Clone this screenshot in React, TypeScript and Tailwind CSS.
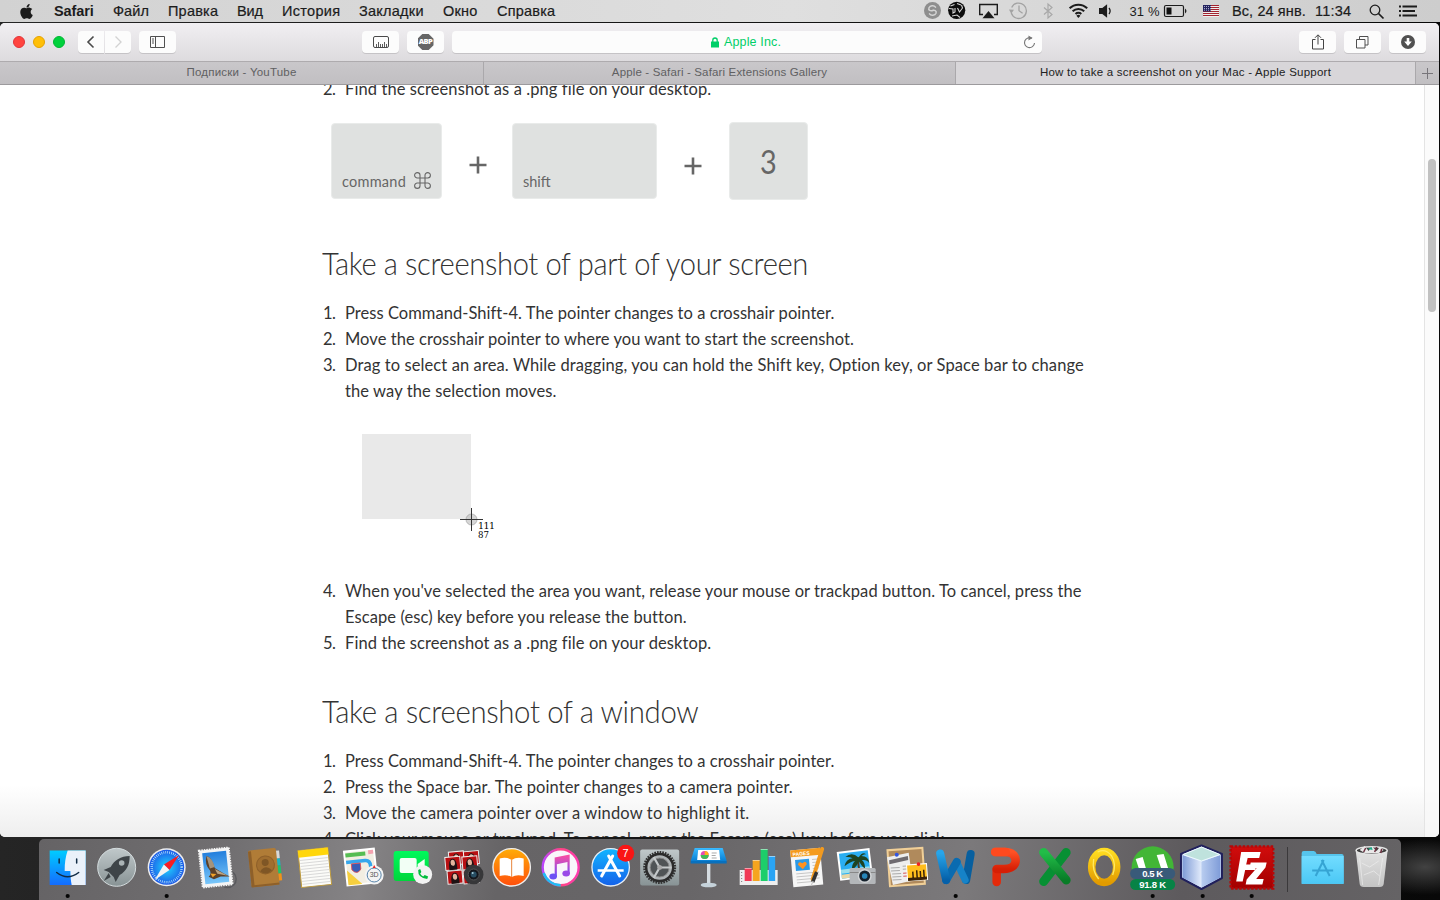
import type { ReactNode } from "react";
import { FaApple } from "react-icons/fa";

const menu: [string, string][] = [
  ["Файл", "w-[55px] tracking-[0.1px]"],
  ["Правка", "w-[69px] tracking-[0.2px]"],
  ["Вид", "w-[45px] tracking-[-0.1px]"],
  ["История", "w-[77px] tracking-[0.3px]"],
  ["Закладки", "w-[84px] tracking-[0.25px]"],
  ["Окно", "w-[54px] tracking-[0.2px]"],
  ["Справка", "w-[70px] tracking-[0.2px]"],
];

function MenuBar() {
  return (
    <div className="flex h-[22px] shrink-0 items-center bg-linear-to-r from-[#d2d2d2] via-[#dfdfdf] via-55% to-[#cdcdcd] text-[14.500px] leading-[22px] whitespace-nowrap text-[#1c1c1c]">
      <FaApple className="ml-[18px] h-[17px] w-[17px] shrink-0" />
      <span className="ml-[19px] w-[59px] shrink-0 font-bold tracking-[-0.1px]">Safari</span>
      {menu.map(([t, c]) => (
        <span key={t} className={`shrink-0 [-webkit-text-stroke:0.2px_#1c1c1c] ${c}`}>{t}</span>
      ))}
      <div className="ml-auto flex h-full shrink-0 items-center [-webkit-text-stroke:0.2px_#1c1c1c]">
        <svg className="h-[22px] w-[282px]" viewBox="922 0 282 22" fill="none">
          <circle cx="932.5" cy="10.5" r="8.500" fill="#8e8e8e" />
          <path d="M935.500 7.200c-1.500-2.200-5.500-1.600-6.500.6-1 2.400 1.500 3.800 4.200 2.400M929.500 13.800c1.500 2.200 5.500 1.600 6.500-.6 1-2.400-1.500-3.800-4.200-2.400" stroke="#d4d4d4" strokeWidth="1.500" strokeLinecap="round" />
          <circle cx="956.700" cy="10.300" r="8.600" fill="#0c0c0c" />
          <path d="M949 8.500l4 .5 0 4 2-1v-4M957.500 8l2 4 3-4-1-3M950.500 6l4-1.500M952 16l5-1 3 2.500M957 3.500l4 1.500" stroke="#d8d8d8" strokeWidth="1.100" />
          <path d="M983 14.500h-3.300v-10h17.600v10H994" stroke="#1c1c1c" strokeWidth="1.400" />
          <path d="M988.500 11l6 7.300h-12z" fill="#1c1c1c" />
          <path d="M1011.700 7.500a7.700 7.700 0 1 1-.4 5.500M1019 5.500v5.200l3.600 2.600" stroke="#a3a3a3" strokeWidth="1.300" />
          <path d="M1009 9.500l5 .2-2.800 4z" fill="#a3a3a3" />
          <path d="M1069.600 8.300a12.400 12.400 0 0 1 17.600 0M1072.600 11.300a8.200 8.200 0 0 1 11.600 0M1075.500 14a4.200 4.200 0 0 1 5.800 0" stroke="#1c1c1c" strokeWidth="2" />
          <path d="M1078.400 18l-2-2.200a2.900 2.900 0 0 1 4 0z" fill="#1c1c1c" />
          <path d="M1099 8h3.300l4.800-3.700v13.400L1102.300 14H1099z" fill="#1c1c1c" />
          <path d="M1109 8a5 5 0 0 1 0 6" stroke="#1c1c1c" strokeWidth="1.300" />
          <path d="M1044 7.500l8 7-4 3.500V4l4 3.500-8 7" stroke="#a8a8a8" strokeWidth="1.200" />
          <text x="1129.500" y="15.500" className="fill-[#1c1c1c] text-[13px]" textLength="30">31 %</text>
          <rect x="1164.500" y="5.500" width="19" height="11" rx="1.500" stroke="#1c1c1c" strokeWidth="1.200" />
          <path d="M1166.500 7.500h5v7h-5z" fill="#111" />
          <path d="M1185 8.500q3 2.500 0 5z" fill="#1c1c1c" />
        </svg>
        <svg className="-ml-px h-[12px] w-[16px]" viewBox="0 0 16 12">
          <path fill="#eee" d="M0 0h16v12H0z" />
          <path d="M0 .5h16M0 2.500h16M0 4.500h16M0 6.500h16M0 8.500h16M0 10.500h16" stroke="#a3232f" />
          <path fill="#22225e" d="M0 0h8v6.500H0z" />
          <path d="M1 1.500h7M1 3.500h7M1 5.200h7" stroke="#c7c7e0" strokeWidth=".8" strokeDasharray="1 1" />
        </svg>
        <span className="ml-[13px] w-[83px] tracking-[0.1px]">Вс, 24 янв.</span>
        <span className="w-[54px] tracking-[0.2px]">11:34</span>
        <svg className="h-[22px] w-[71px]" viewBox="1369 0 71 22" fill="none" stroke="#1c1c1c">
          <circle cx="1375" cy="10" r="4.800" strokeWidth="1.300" />
          <path d="M1378.500 13.500l5 5" strokeWidth="1.700" />
          <path d="M1402.500 6.500H1417M1402.500 11h12.500M1402.500 15.500H1417M1399 6.500h2M1399 11h2M1399 15.500h2" strokeWidth="1.900" />
        </svg>
      </div>
    </div>
  );
}

function Btn({ className, children }: { className: string; children: ReactNode }) {
  return (
    <div className={`flex h-[22px] shrink-0 items-center justify-center bg-[#fcfcfc] shadow-[0_1px_0_rgba(0,0,0,0.12)] ${className}`}>
      {children}
    </div>
  );
}

function Toolbar() {
  return (
    <div className="flex h-[39px] shrink-0 items-center border-b border-[#aeabae] bg-linear-to-b from-[#f1eff2] to-[#dddbde]">
      <div className="ml-[13px] flex gap-[8px]">
        <div className="h-[12px] w-[12px] rounded-full border border-[#e2333a] bg-[#ff443f]" />
        <div className="h-[12px] w-[12px] rounded-full border border-[#e6a200] bg-[#ffbf08]" />
        <div className="h-[12px] w-[12px] rounded-full border border-[#00b634] bg-[#00d13c]" />
      </div>
      <Btn className="ml-[13px] w-[26px] rounded-l-[4px]">
        <svg width="10" height="14" viewBox="0 0 10 14" fill="none" stroke="#4a4a4a" strokeWidth="1.600"><path d="M7.500 1.500L2 7l5.500 5.500" /></svg>
      </Btn>
      <Btn className="ml-px w-[26px] rounded-r-[4px]">
        <svg width="10" height="14" viewBox="0 0 10 14" fill="none" stroke="#d2d2d2" strokeWidth="1.300"><path d="M2.500 1.500L8 7l-5.500 5.500" /></svg>
      </Btn>
      <Btn className="ml-[8px] w-[37px] rounded-[4px]">
        <svg width="15" height="12" viewBox="0 0 15 12" fill="none" stroke="#505050"><path d="M.5.5h14v11H.5zM5.500.5v11M2 3h2M2 5h2M2 7h2" /></svg>
      </Btn>
      <Btn className="ml-[186px] w-[37px] rounded-[4px]">
        <svg width="16" height="12" viewBox="0 0 16 12" fill="none" stroke="#4a4a4a"><rect x=".5" y=".5" width="15" height="11" rx="1.500" /><path d="M3.500 11V8M5.500 11V6M7.500 11V8M9.500 11V8M11.500 11V6M13.500 11V8" strokeWidth=".9" /></svg>
      </Btn>
      <Btn className="ml-[8px] w-[37px] rounded-[4px]">
        <div className="flex h-[16px] w-[16px] items-center justify-center bg-[#666] font-[Open_Sans,sans-serif] text-[7.500px] font-extrabold tracking-[-0.5px] text-white [clip-path:polygon(30%_0,70%_0,100%_30%,100%_70%,70%_100%,30%_100%,0_70%,0_30%)]">ABP</div>
      </Btn>
      <div className="ml-[8px] flex h-[22px] w-[590px] shrink-0 items-center rounded-[4px] bg-[#fcfcfc] shadow-[0_1px_0_rgba(0,0,0,0.12)]">
        <svg className="ml-[259px]" width="8" height="11" viewBox="0 0 8 11"><rect y="4.500" width="8" height="6" fill="#00cf68" /><path d="M1.800 5V3.200a2.200 2.200 0 0 1 4.400 0V5" fill="none" stroke="#00cf68" strokeWidth="1.300" /></svg>
        <span className="ml-[5px] text-[12.500px] leading-[22px] tracking-[0.15px] text-[#00cf68]">Apple Inc.</span>
        <svg className="mr-[6px] ml-auto" width="13" height="14" viewBox="0 0 13 14" fill="none" stroke="#777"><path d="M9 3.300A5 5 0 1 0 11.500 8" strokeWidth="1.100" /><path d="M5.500.5v5l4-2.500z" fill="#777" stroke="none" /></svg>
      </div>
      <Btn className="ml-[257px] w-[37px] rounded-[4px]">
        <svg width="12" height="16" viewBox="0 0 12 16" fill="none" stroke="#444"><path d="M3.500 5.500h-3v9.500h11V5.500h-3M6 10.500V1M3 3.800L6 .8l3 3" /></svg>
      </Btn>
      <Btn className="ml-[8px] w-[37px] rounded-[4px]">
        <svg width="13" height="13" viewBox="0 0 13 13" fill="none" stroke="#505050"><path d="M.5 3.500h8.500v8.500H.5zM3.500 3.500v-3h8.500v8.500H9" /></svg>
      </Btn>
      <Btn className="ml-[8px] w-[37px] rounded-[4px]">
        <svg width="14" height="14" viewBox="0 0 14 14"><circle cx="7" cy="7" r="7" fill="#505050" /><path d="M5.700 3h2.600v3.500h2.500L7 11 3.200 6.500h2.500z" fill="#fff" /></svg>
      </Btn>
    </div>
  );
}

function Tabs() {
  const base = "flex h-full shrink-0 items-center justify-center whitespace-nowrap";
  return (
    <div className="flex h-[23px] shrink-0 border-b border-[#9c9a9d] bg-linear-to-b from-[#c9c7ca] to-[#c1bfc2] text-[11.500px] text-[#606062]">
      <div className={`${base} w-[484px] border-r border-[#aaa8ab] tracking-[0.2px]`}>Подписки - YouTube</div>
      <div className={`${base} w-[472px] border-r border-[#aaa8ab] tracking-[0.15px]`}>Apple - Safari - Safari Extensions Gallery</div>
      <div className={`${base} w-[460px] border-r border-[#aaa8ab] bg-[#d8d6d9] tracking-[0.24px] text-[#222]`}>How to take a screenshot on your Mac - Apple Support</div>
      <div className={`${base} w-[23px]`}>
        <svg width="11" height="11" viewBox="0 0 11 11" stroke="#77757a"><path d="M5.500 0v11M0 5.500h11" /></svg>
      </div>
    </div>
  );
}

function Line({ n, t, c = "" }: { n?: string; t: string; c?: string }) {
  return (
    <div className="flex h-[26px] text-[16.500px] leading-[26px] whitespace-nowrap text-[#333]">
      <span className="w-[23px] shrink-0 pl-px tracking-[-0.6px]">{n}</span>
      <span className={c}>{t}</span>
    </div>
  );
}

function Article() {
  const h = "flex h-[40px] origin-left items-center text-[32px] font-light whitespace-nowrap text-[#333] tracking-[-0.4px]";
  return (
    <div className="-mt-[9px] ml-[322px] flex w-[800px] flex-col font-[Lato,sans-serif]">
      <Line n="2." t="Find the screenshot as a .png file on your desktop." c="tracking-[0.09px]" />
      <div className="mt-[20px] ml-[9px] flex h-[78px] items-center text-[#666]">
        <div className="flex h-[76px] w-[111px] items-end rounded-[4px] border border-[#e9ebea] bg-[#dfe1e0] pb-[5px] pl-[10px] text-[14.500px] leading-[22px] tracking-[0.25px]">
          command
          <svg className="mb-[4px] ml-[8px]" width="17" height="17" viewBox="0 0 17 17" fill="none" stroke="#666" strokeWidth="1.100"><path d="M6 6h5v5H6zM6 6H3.300A2.700 2.700 0 1 1 6 3.300zM11 6V3.300A2.700 2.700 0 1 1 13.700 6zM6 11H3.300A2.700 2.700 0 1 0 6 13.700zM11 11h2.700a2.700 2.700 0 1 1-2.700 2.700z" /></svg>
        </div>
        <svg className="mt-[7px] ml-[27px]" width="18" height="18" viewBox="0 0 18 18" stroke="#666" strokeWidth="2.600"><path d="M9 .5v17M.5 9h17" /></svg>
        <div className="ml-[25px] flex h-[76px] w-[145px] items-end rounded-[4px] border border-[#e9ebea] bg-[#dfe1e0] pb-[5px] pl-[10px] text-[14.500px] leading-[22px]">shift</div>
        <svg className="mt-[9px] ml-[27px]" width="18" height="18" viewBox="0 0 18 18" stroke="#666" strokeWidth="2.600"><path d="M9 .5v17M.5 9h17" /></svg>
        <div className="ml-[27px] flex h-[78px] w-[79px] items-center justify-center rounded-[4px] border border-[#e9ebea] bg-[#dfe1e0] pt-[2px] text-[32px]"><span className="scale-x-90">3</span></div>
      </div>
      <h2 className={`${h} mt-[43px] scale-x-[0.911]`}>Take a screenshot of part of your screen</h2>
      <div className="mt-[17px]">
        <Line n="1." t="Press Command-Shift-4. The pointer changes to a crosshair pointer." c="tracking-[0.045px]" />
        <Line n="2." t="Move the crosshair pointer to where you want to start the screenshot." c="tracking-[0.06px]" />
        <Line n="3." t="Drag to select an area. While dragging, you can hold the Shift key, Option key, or Space bar to change" c="tracking-[0.1px]" />
        <Line t="the way the selection moves." c="tracking-[0.1px]" />
      </div>
      <div className="mt-[30px] ml-[40px] h-[144px] shrink-0">
        <svg width="140" height="110" viewBox="0 0 140 110" fill="none">
          <path fill="#e9e9e9" d="M0 0h109v85H0z" />
          <circle cx="109.500" cy="85.500" r="5.500" fill="#bbb" fillOpacity=".6" stroke="#999" strokeOpacity=".6" />
          <path d="M109.500 74v23M98 85.500h23" stroke="#333" />
          <g className="fill-black font-[DejaVu_Serif,serif] text-[9.500px]">
            <text x="116" y="95" textLength="17">111</text>
            <text x="116" y="104" textLength="11" lengthAdjust="spacingAndGlyphs">87</text>
          </g>
        </svg>
      </div>
      <div>
        <Line n="4." t="When you've selected the area you want, release your mouse or trackpad button. To cancel, press the" c="tracking-[0.08px]" />
        <Line t="Escape (esc) key before you release the button." c="tracking-[0.09px]" />
        <Line n="5." t="Find the screenshot as a .png file on your desktop." c="tracking-[0.09px]" />
      </div>
      <h2 className={`${h} mt-[35px] scale-x-[0.918]`}>Take a screenshot of a window</h2>
      <div className="mt-[17px]">
        <Line n="1." t="Press Command-Shift-4. The pointer changes to a crosshair pointer." c="tracking-[0.045px]" />
        <Line n="2." t="Press the Space bar. The pointer changes to a camera pointer." c="tracking-[0.08px]" />
        <Line n="3." t="Move the camera pointer over a window to highlight it." c="tracking-[0.16px]" />
        <Line n="4." t="Click your mouse or trackpad. To cancel, press the Escape (esc) key before you click." c="tracking-[0.035px]" />
      </div>
    </div>
  );
}

function Defs() {
  const g = (id: string, a: string, b: string) => (
    <linearGradient id={id} x1="0" y1="0" x2="0" y2="1"><stop stopColor={a} /><stop offset="1" stopColor={b} /></linearGradient>
  );
  return (
    <defs>
      {g("fin", "#00ccff", "#146cff")}{g("silver", "#c0c8ca", "#889395")}{g("green", "#00f95c", "#00d63b")}
      {g("orange", "#ffad08", "#ff4e0c")}{g("store", "#12b5ff", "#1461ea")}{g("key", "#3abaff", "#087fd4")}
      {g("folder", "#72dcff", "#4bc8f5")}{g("blu", "#27a5ea", "#0560a9")}{g("red", "#ff5225", "#d71f05")}
      {g("xls", "#22bd48", "#087c27")}{g("yel", "#ffdc20", "#e29b00")}{g("fz", "#d10c0c", "#a30000")}
      {g("sky", "#237fdd", "#79c6f9")}{g("note", "#ff4f9f", "#6b4cff")}{g("bin", "#e2e2e2", "#c4c4c4")}
      <radialGradient id="saf"><stop stopColor="#20d7ff" /><stop offset="1" stopColor="#1b59e7" /></radialGradient>
      <linearGradient id="itn"><stop stopColor="#b945ff" /><stop offset=".5" stopColor="#ff4583" /><stop offset="1" stopColor="#ff3ab0" /></linearGradient>
      <linearGradient id="cubeL"><stop stopColor="#7e9bd6" /><stop offset="1" stopColor="#e2ebfb" /></linearGradient>
      <linearGradient id="cubeR"><stop stopColor="#b9cdf0" /><stop offset="1" stopColor="#7f9cd8" /></linearGradient>
    </defs>
  );
}

const icons: { dot?: boolean; art: ReactNode }[] = [
  { dot: true, art: <>
    <path fill="url(#fin)" d="M-18 11.500h36V46h-36z" />
    <path fill="#eaf1fa" d="M0 11.500h18V46H4c-.8-4-1.300-9-1.300-14H-3c0-8 .8-14 3-20.500z" />
    <path d="M-8.500 20v4M9 20v4M-11 33.500q11 8.500 22 0" fill="none" stroke="#102b45" strokeWidth="1.500" strokeLinecap="round" />
  </> },
  { art: <>
    <circle cy="28.300" r="19" fill="url(#silver)" stroke="#d4dcde" />
    <path d="M13 17c-9 0-15 4-19 11l-7 3 5 2 5 5 2 5 4-7c7-4 10-10 10-19z" fill="#3e4448" />
    <path d="M-8 34l-5 8 7-4z" fill="#3e4448" /><circle cx="5" cy="24" r="2.800" fill="#aab3b5" />
  </> },
  { dot: true, art: <>
    <circle cy="28.300" r="19" fill="#eee" /><circle cy="28.300" r="17.500" fill="url(#saf)" />
    <circle cy="28.300" r="15" fill="none" stroke="#bfe9ff" strokeWidth="2.500" strokeDasharray=".7 1.270" />
    <path d="M12.500 16L-2.800 25.500 2.800 31z" fill="#f51e24" /><path d="M-12 41l9.200-15.500L2.800 31z" fill="#f2f2f2" />
  </> },
  { art: <>
    <circle cx="12" cy="40" r="8.500" fill="none" stroke="#5a5a5e" strokeWidth="1.500" />
    <g transform="rotate(-6 0 28)"><path fill="#f4f4f4" stroke="#f4f4f4" strokeWidth="2" strokeDasharray="1.500 1" d="M-15 10h30v37h-30z" /><path fill="url(#sky)" d="M-12 13h24v31h-24z" />
      <path d="M-8 16q5 1 7 13l8 6 6 4-9-1-7 2-5-3q3-2 2-6-5-7-2-15z" fill="#5d4128" /><path d="M-8 16l2 13 5-1q-1-9-7-12z" fill="#a4937c" /><path d="M-1 30l9 6 3 2-10-3z" fill="#b9a384" /><path d="M-6 34l6 1-4 3z" fill="#f0a22a" /></g>
  </> },
  { art: <>
    <g transform="rotate(-6 0 28)"><path fill="#d8d8d8" d="M12 13h4v8h-4z" /><path fill="#1cb2c8" d="M12 21h4v7h-4z" /><path fill="#20c26c" d="M12 28h4v8h-4z" /><path fill="#f0921a" d="M12 36h4v7h-4z" />
      <rect x="-15" y="10" width="28" height="37" rx="2" fill="#b07c37" /><path fill="#8e602a" d="M-15 11h3v35h-3z" /><path fill="#8e602a" d="M-15 45h28v2h-28z" />
      <circle cx="1" cy="26" r="9" fill="#a06e30" stroke="#8e602a" /><circle cx="1" cy="23.500" r="3.500" fill="#7f5625" /><path d="M-5 32q6-7 12 0-6 5-12 0z" fill="#7f5625" /></g>
  </> },
  { art: <g transform="rotate(-6 0 28)">
    <path fill="#fbfbf8" stroke="#bf9b3c" d="M-15 10h30v37h-30z" /><path fill="#ffd60a" d="M-15 10h30v7h-30z" />
    <path stroke="#d2d2d2" strokeWidth=".8" d="M-14 20h28M-14 23h28M-14 26h28M-14 29h28M-14 32h28M-14 35h28M-14 38h28M-14 41h28M-14 44h28" />
  </g> },
  { art: <>
    <g transform="translate(-3) rotate(-6 0 28)"><path fill="#f2eee2" stroke="#fff" strokeWidth="2" d="M-15 11h30v34h-30z" /><path fill="#56bd53" d="M-14 13h20v4h-20z" /><path fill="#f5a3b0" d="M9 12h5v4H9z" />
      <path fill="#f6cf3e" d="M-14 30l14 15h-14z" /><path d="M-14 22H5q5 0 5 6v17" stroke="#36a7ed" strokeWidth="3.500" fill="none" /><path d="M-9 24h9v6q-4 6-9 0z" fill="#395db6" stroke="#e74a4a" strokeWidth=".8" /></g>
    <circle cx="10.500" cy="36" r="9.500" fill="#f4f4f4" /><circle cx="10.500" cy="36" r="7" fill="none" stroke="#5583a9" /><text x="6" y="38.500" className="fill-[#555] text-[7px]">3D</text><path d="M10.500 26l-1.500 3h3z" fill="#e22" />
  </> },
  { art: <>
    <rect x="-19" y="12" width="35" height="30" rx="3" fill="url(#green)" />
    <rect x="-13" y="19" width="17" height="15" rx="2" fill="#f2fff5" /><path d="M5 25l7-5v13l-7-4z" fill="#f2fff5" />
    <circle cx="10" cy="35.500" r="9.500" fill="#f3f3f3" /><path d="M5.500 31q-.5 8 9 9l1-2.500-3.500-1.500-1.500 1.500q-2-1-3-3l1.200-1.500-1.200-3z" fill="#00bd3b" />
  </> },
  { art: <>
    <g transform="rotate(-5 0 28)">{[[-13, 12], [2, 13], [-17, 17], [0, 18], [-16, 31], [0, 32]].map(([x, y]) => (
      <g key={`${x}/${y}`} transform={`translate(${x} ${y})`}><path fill="#b70f12" stroke="#eee" d="M0 0h15v13H0z" /><path d="M3.500 13q-.5-11 4-11 4.500 0 4 11z" fill="#1e1214" /><ellipse cx="7.500" cy="6" rx="2.200" ry="3" fill="#e3b59d" /></g>))}</g>
    <circle cx="11" cy="35.500" r="9.800" fill="#373739" /><circle cx="11" cy="35.500" r="5.500" fill="#15171d" stroke="#555" /><circle cx="11" cy="35.500" r="3" fill="#274d62" /><circle cx="10" cy="34" r="1" fill="#a6ccd8" />
  </> },
  { art: <>
    <circle cy="28.300" r="18.700" fill="url(#orange)" stroke="#eee" strokeWidth="1.400" />
    <path d="M0 21q-5-3.500-12-1.500V37q7-2 12 1 5-3 12-1V19.500Q5 17.500 0 21z" fill="#fff" /><path d="M0 21v17" stroke="#e7853c" />
  </> },
  { art: <>
    <circle cy="28.300" r="18" fill="#f9f6fb" stroke="url(#itn)" strokeWidth="2.400" />
    <path d="M-17 34a18 18 0 0 0 17 12.300" fill="none" stroke="#20bdf4" strokeWidth="2.400" />
    <path fillRule="evenodd" fill="url(#note)" d="M-6 18.500L9 15.500V35H6.800V23L-3.800 25.200V38H-6z" />
    <ellipse cx="-7.500" cy="37.500" rx="3.800" ry="3" fill="#6c51f4" /><ellipse cx="5.500" cy="34.500" rx="3.800" ry="3" fill="#9a4ae8" />
  </> },
  { art: <>
    <circle cy="28.300" r="18.700" fill="url(#store)" stroke="#e7eef5" strokeWidth="1.300" />
    <path d="M2 17L-9 37M-2 17L9 37" stroke="#fff" strokeWidth="3" strokeLinecap="round" /><path d="M-13 31.500h26" stroke="#fff" strokeWidth="2.500" />
    <circle cx="15" cy="14.300" r="8.500" fill="#f91515" /><text x="15" y="18.300" textAnchor="middle" className="fill-white text-[11px]">7</text>
  </> },
  { art: <>
    <rect x="-19.500" y="10.500" width="39" height="36" rx="2" fill="url(#silver)" />
    <circle cy="28.500" r="15" fill="none" stroke="#333" strokeWidth="3" strokeDasharray="1.600 1" /><circle cy="28.500" r="13.500" fill="#aeb3b5" stroke="#2b2b2b" strokeWidth="2.500" />
    <circle cy="28.500" r="9.500" fill="#505456" stroke="#888" /><path d="M0 28.500h12M0 28.500l-6-10.500M0 28.500L-6 39" stroke="#c5c9ca" strokeWidth="2.200" /><circle cy="28.500" r="2.500" fill="#aaa" />
  </> },
  { art: <>
    <path fill="#d5dce1" d="M-1.700 25h3.400v20h-3.400z" /><ellipse cy="46" rx="8" ry="2.300" fill="#c5d2da" />
    <path fill="url(#key)" d="M-14 9h28l4 13h-36z" /><path fill="#0870bd" d="M-18 22h36v2.500h-36z" /><path fill="#fff" d="M-10.500 11h21l1 10h-23z" />
    <circle cx="-4" cy="16" r="4" fill="#e34bb6" /><path d="M-4 16v-4a4 4 0 0 1 4 4z" fill="#ffb11b" /><path d="M-4 16h4a4 4 0 0 1-8 0z" fill="#40bd55" /><path d="M3 14h5M3 16.500h4M3 19h5" stroke="#aaa" />
  </> },
  { art: <>
    <path fill="#eee" d="M-19 31h38v15h-38z" /><path d="M-17 33v11" stroke="#777" strokeDasharray="1 2" />
    <path fill="#f13954" d="M-14 29h7v13h-7z" /><path fill="#f6a51f" d="M-6 21h7v21h-7z" /><path fill="#1cce6a" d="M2 10h7v32H2z" /><path fill="#2aa4f4" d="M10 17h6.500v25H10z" />
    <path stroke="#fff" strokeOpacity=".5" d="M-14 29.500h7M-6 21.500h7M2 10.500h7M10 17.500h6.500" />
  </> },
  { art: <>
    <g transform="translate(-1) rotate(-5 0 28)"><path fill="#f6f6f6" d="M-15 10h30v37h-30z" /><path fill="#f59b1d" d="M-15 10h30v7h-30z" /><text x="-13" y="16" className="fill-white text-[5px] font-bold">PAGES</text>
      <path fill="#2c9ae8" d="M-11 20h14v11h-14z" /><path d="M-4 30l-4.500-5q1-4 4.500-1 3.500-3 4.500 1z" fill="#ff9222" /><path stroke="#bbb" d="M-11 34h23M-11 37h23M-11 40h23M-11 43h18M6 21h6M6 24h6M6 27h6M6 30h6" strokeWidth=".8" /></g>
    <path d="M14.500 10L5 40" stroke="#f29a1f" strokeWidth="4" strokeLinecap="round" /><path d="M9 33L5 43" stroke="#333" strokeWidth="3.500" /><path d="M5.500 42l-2 4.500" stroke="#ccc" strokeWidth="1.200" />
  </> },
  { art: <>
    <g transform="translate(-2) rotate(-7 0 28)"><path fill="#fff" d="M-16 11h33v29h-33z" /><path fill="#2aaef2" d="M-14 13h29v25h-29z" /><path fill="#9ce0eb" d="M-14 29h29v4h-29z" /><path fill="#e8d7a6" d="M-14 34h29v4h-29z" />
      <path d="M5 19q-2 8 0 18" stroke="#4c3c23" strokeWidth="2" fill="none" /><path d="M5 19Q-1 12-8 17q4 0 7 2-7 0-9 7 6-4 11-4-4 3-4 9 5-3 8-8 2 5 5 8 1-6-2-9 5 0 7 4 0-7-7-8 3-2 5-1-3-4-8 2z" fill="#1e4422" /></g>
    <rect x="-7" y="29" width="26" height="16" rx="1.500" fill="#b4b7ba" /><path fill="#888" d="M-7 33h26v1h-26z" /><circle cx="8" cy="37" r="7" fill="#d1d3d5" /><circle cx="8" cy="37" r="5.500" fill="#15212c" /><circle cx="8" cy="37" r="2.800" fill="#2785b8" />
  </> },
  { art: <g transform="rotate(-4 0 28)">
    <path fill="#b08a5c" stroke="#f0cf97" strokeWidth="2" d="M-18 10h35v36h-35z" /><path fill="#eee" d="M-19 17l22-3 2 28-20 3z" /><path fill="#6f6b70" d="M-17 20l19-3v4l-19 3z" />
    <path d="M-16 28h9M-16 31h9M-15 34h9M-15 37h9M-15 40h9M-4 27h7M-4 30h7" stroke="#aaa" /><path d="M-4 34h7M-4 37h7" stroke="#da5252" />
    <path fill="#ffbd1c" stroke="#fff" d="M0 26h20v16H0z" /><path fill="#3a2107" d="M.5 39h19v3H.5zM5 33h1.500v7H5zM9 32h1.500v8H9zM12.500 33H14v7h-1.500zM16 32h1.500v8H16z" /><circle cx="-9" cy="15" r="2" fill="#3356e0" /><circle cx="12" cy="26" r="1.800" fill="#e22" />
  </g> },
  { dot: true, art: <g fill="none" strokeWidth="8" strokeLinecap="round" strokeLinejoin="round">
    <path d="M15 15l-4.500 26" stroke="#075f9f" /><path d="M1 23l8.500 18" stroke="#1683c8" strokeWidth="7" /><path d="M-9.500 41L1 23" stroke="#0a6bb0" /><path d="M-15.500 14.500L-9.500 41" stroke="url(#blu)" />
  </g> },
  { art: <g fill="none" strokeWidth="8.500" strokeLinecap="round" strokeLinejoin="round">
    <path d="M-8 31v12" stroke="#e32a0a" /><path d="M-9.500 13H0c8 0 11 4 11 8.500s-4 8.500-12 8.500h-7" stroke="url(#red)" /><path d="M-9.500 13H1" stroke="#ff4a1e" />
  </g> },
  { art: <g fill="none" strokeWidth="9" strokeLinecap="round">
    <path d="M11.500 13.500L-11 42.500" stroke="#079033" /><path d="M-11 13.500L11.500 41" stroke="url(#xls)" />
  </g> },
  { art: <>
    <ellipse cx=".5" cy="28" rx="12.500" ry="15.500" fill="none" stroke="url(#yel)" strokeWidth="7.500" /><path d="M-6 13q8-4 14 4 5 8 1 19M-10 20q-2 12 5 20" fill="none" stroke="#ffea62" strokeWidth="1.300" />
  </> },
  { dot: true, art: <>
    <circle cy="28.300" r="21" fill="#42b636" /><path d="M-17 20l7-2 4 14h-7zM4 16l7-1 5 16H9z" fill="#fff" /><path d="M-12 30h24v6h-24z" fill="#328930" />
    <rect x="-22.500" y="29" width="45" height="11" rx="5.500" fill="#395a79" /><rect x="-22.500" y="40" width="45" height="11" rx="5.500" fill="#078346" />
    <g className="fill-white text-[9.500px] font-bold" textAnchor="middle"><text y="38" textLength="21">0.5 K</text><text y="49" textLength="27">91.8 K</text></g>
  </> },
  { dot: true, art: <g transform="translate(-1.200)" strokeLinejoin="round">
    <path d="M-20.500 15L0 6.500 20.500 15v24L0 50l-20.500-11z" fill="#d8e6fa" stroke="#20205c" strokeWidth="2" /><path d="M-19 16L0 22.500V48.500l-19-10z" fill="url(#cubeL)" /><path d="M19 16L0 22.500V48.500l19-10z" fill="url(#cubeR)" /><path d="M-18.500 15.500L0 8l18.500 7.500L0 22z" fill="#bfe2dd" stroke="#edf8ff" />
  </g> },
  { dot: true, art: <>
    <path fill="url(#fz)" stroke="#b60808" strokeWidth="2.500" strokeDasharray="2.500 1.500" d="M-21 7.500h42.500v42H-21z" />
    <path fill="#fff" d="M-10.500 13H9l-1.500 6H-4l-1.500 6.500H5L3.500 31h-10L-9 42.500h-6.500z" /><path fill="#fff" d="M-1 23.500h16l-1.200 5L4.500 40H12l-1.300 5.500H-6l1-5 10-11.500h-7z" />
  </> },
];

function Icon({ art, dot }: { art: ReactNode; dot?: boolean }) {
  return (
    <svg className="h-[61px] w-[49.330px] shrink-0 overflow-visible" viewBox="-24.670 0 49.330 61">
      {art}
      {dot && <circle cy="57" r="2.100" fill="#050505" />}
    </svg>
  );
}

function Dock() {
  return (
    <div className="mt-[2px] ml-[39px] flex h-[61px] w-[1362px] shrink-0 rounded-t-[5px] bg-[linear-gradient(100deg,#656365_0%,#716f71_14%,#858385_24%,#666466_34%,#686668_48%,#7b797b_68%,#5d5a5d_84%,#656365_100%)] pl-[4px]">
      <svg className="h-0 w-0"><Defs /></svg>
      {icons.map((ic, i) => <Icon key={i} {...ic} />)}
      <div className="mt-[8px] ml-[10.500px] h-[45px] w-px shrink-0 bg-[#3b393b]" />
      <div className="ml-[10px] flex">
        <Icon art={<><path fill="#56c4ec" d="M-21 14q0-2 2-2h10q2 0 3 3h25q2 0 2 2v28h-42z" /><path fill="url(#folder)" d="M-21 17h42v27.500h-42z" /><path d="M1 21l-8 16M-1 21l8 16M-10.500 31.500h21" stroke="#35a4d3" strokeWidth="2" /></>} />
        <Icon art={<><path fill="url(#bin)" d="M-16 11h32l-4 34q-.5 3-4 3H-8q-3.500 0-4-3z" /><path d="M-12 19l3 27M11 19l-4 27M-10 24l8 4 9-6M-8 36l10-4 6 5" stroke="#f2f2f2" strokeOpacity=".6" fill="none" /><ellipse cy="11.500" rx="15.500" ry="3.800" fill="#3c3c3c" stroke="#e4e4e4" strokeWidth="1.500" /><path d="M-12 11l5-4 4 5 3-5 5 5 3-4 4 3-5 3h-14z" fill="#e8e8e8" /><path d="M-4 10l4-2 1 3z" fill="#19aa86" /><path d="M3 13l2-5M-8 13l2-4M9 14l1-4" stroke="#6d3040" strokeWidth="1.500" /></>} />
      </div>
    </div>
  );
}

export default function App() {
  return (
    <div className="flex h-[900px] w-[1440px] flex-col overflow-hidden bg-[radial-gradient(ellipse_60px_28px_at_1425px_867px,#424242,transparent),linear-gradient(90deg,#252525,#141414_50%,#080808)] font-[Liberation_Sans,Arial,sans-serif]">
      <MenuBar />
      <div className="mt-px flex h-[814px] w-[1439px] shrink-0 flex-col overflow-hidden rounded-[5px] bg-white">
        <Toolbar />
        <Tabs />
        <div className="flex min-h-0 flex-1 justify-between overflow-hidden bg-[linear-gradient(#fff_0,#fff_700px,#eeeeee_752px)]">
          <Article />
          <div className="flex w-[15px] justify-center border-l border-[#e4e4e4] bg-[#fafafa]/70">
            <div className="mt-[74px] h-[153px] w-[8px] rounded-full bg-[#c1c1c1]" />
          </div>
        </div>
      </div>
      <Dock />
    </div>
  );
}
